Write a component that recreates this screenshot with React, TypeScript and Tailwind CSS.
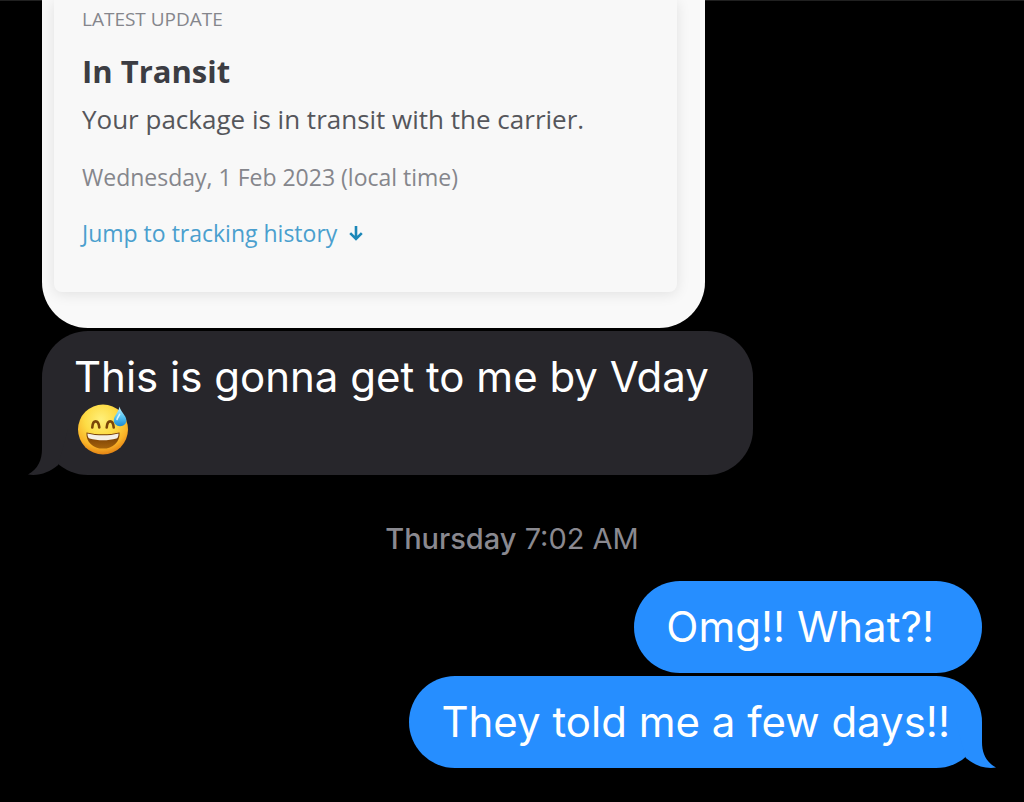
import React, { ReactNode } from 'react';

interface Message {
  id: number;
  text: string;
  tail: boolean;
}

const sent: Message[] = [
  { id: 1, text: 'Omg!! What?!', tail: false },
  { id: 2, text: 'They told me a few days!!', tail: true },
];

function Tail({ side }: { side: 'left' | 'right' }) {
  return (
    <svg
      viewBox="0 0 40 46"
      aria-hidden="true"
      className={
        side === 'left'
          ? 'absolute bottom-0 -left-3.5 w-10 fill-[#27262b]'
          : 'absolute bottom-0 -right-3.5 w-10 -scale-x-100 fill-[#268eff]'
      }
    >
      <path d="M14 0V20C14 31 10 40 0 45.6C12 47 21 43.5 30.2 36L40 0Z" />
    </svg>
  );
}

function SweatSmile() {
  return (
    <svg viewBox="0 0 52 52" role="img" aria-label="Grinning face with sweat" className="ml-1 size-13">
      <defs>
        <radialGradient id="face" cx="0.46" cy="0.3" r="0.72">
          <stop offset="0" stopColor="#fff07a" />
          <stop offset="0.45" stopColor="#fddb45" />
          <stop offset="0.78" stopColor="#f9b227" />
          <stop offset="1" stopColor="#e07c12" />
        </radialGradient>
        <linearGradient id="drop" x1="0" y1="0" x2="0" y2="1">
          <stop offset="0" stopColor="#c9f3ff" />
          <stop offset="0.5" stopColor="#5cc8f4" />
          <stop offset="1" stopColor="#1c8ad2" />
        </linearGradient>
        <linearGradient id="mouth" x1="0" y1="0" x2="0" y2="1">
          <stop offset="0" stopColor="#6b3403" />
          <stop offset="1" stopColor="#a5630c" />
        </linearGradient>
      </defs>
      <circle cx="25" cy="26.5" r="25" fill="url(#face)" />
      <path d="M14.3 24.5C14.8 16.3 20.4 16.3 21.3 24.5M28.7 24.5C29.4 16.3 35 16.3 35.7 24.5" fill="none" stroke="#7a4508" strokeWidth="2.6" strokeLinecap="round" />
      <path d="M8.5 29.4C19 32 31 32 41.5 29.4C42.2 38.8 35 45.6 25 45.6C15 45.6 7.8 38.8 8.5 29.4Z" fill="url(#mouth)" />
      <path d="M9.4 30.4C19.5 32.9 30.5 32.9 40.6 30.4C40.6 33 39.8 35 38.5 35.4C30 37.8 20 37.8 11.5 35.4C10.2 35 9.4 33 9.4 30.4Z" fill="#f5efe6" />
      <path d="M41.5 3.5C42.3 8.5 48.4 12.5 48.4 17.3C48.4 20.9 45.6 23.3 42 23.2C38.3 23.1 35.6 20.5 35.8 17C36.2 12.5 40.7 9 41.5 3.5Z" fill="url(#drop)" />
      <path d="M39 16.5C39.4 14.5 41 13 41.6 11.2" fill="none" stroke="#ffffff" strokeOpacity="0.75" strokeWidth="1.6" strokeLinecap="round" />
    </svg>
  );
}

function SentBubble({ children, tail }: { children: ReactNode; tail: boolean }) {
  return (
    <div
      className={`relative rounded-[46px] bg-[#268eff] py-5 pl-8 text-[42px] leading-[52px] text-white ${tail ? 'pr-8' : 'pr-12'}`}
    >
      {children}
      {tail && <Tail side="right" />}
    </div>
  );
}

export default function App() {
  return (
    <main className="min-h-screen border-t border-[#202020] bg-black pr-[42px] pb-8 pl-[42px] font-['Inter',sans-serif]">
      {/* Shared tracking preview */}
      <section className="-mt-px w-[663px] max-w-full overflow-hidden rounded-b-[46px] bg-[#f9f9f9] pr-7 pb-9 pl-3 font-['Open_Sans',sans-serif]">
        <div className="rounded-b-lg bg-[#f8f8f8] px-7 pt-[7px] pb-10 shadow-[0_2px_14px_rgba(0,0,0,0.10)]">
          <p className="text-[19px] leading-6 text-[#85868c]">LATEST UPDATE</p>
          <h2 className="mt-5 text-[31px] leading-10 font-bold text-[#3c3d43]">In Transit</h2>
          <p className="mt-2 text-[26px] leading-10 text-[#55565b]">Your package is in transit with the carrier.</p>
          <p className="mt-5 text-[23px] leading-9 text-[#85868c]">Wednesday, 1 Feb 2023 (local time)</p>
          <a href="#history" className="mt-5 mb-px flex items-center gap-3 text-[23px] leading-9 text-[#4a9fce]">
            Jump to tracking history
            <svg viewBox="0 0 14 16" aria-hidden="true" className="w-3.5 fill-none stroke-[#1b87b8] stroke-[2.6]">
              <path d="M7 1V14M1.2 8.2L7 14L12.8 8.2" />
            </svg>
          </a>
        </div>
      </section>

      {/* Received */}
      <div className="mt-[3px] flex">
        <div className="relative rounded-[46px] bg-[#27262b] py-5 pr-11 pl-8 text-[42px] leading-[52px] text-white">
          <p>This is gonna get to me by Vday</p>
          <SweatSmile />
          <Tail side="left" />
        </div>
      </div>

      <p className="mt-12 text-center text-[29px] leading-8 text-[#8a8990]">
        <span className="font-medium">Thursday</span> 7:02 AM
      </p>

      {/* Sent */}
      <div className="mt-[26px] flex flex-col items-end gap-[3px]">
        {sent.map((message) => (
          <SentBubble key={message.id} tail={message.tail}>
            {message.text}
          </SentBubble>
        ))}
      </div>
    </main>
  );
}
